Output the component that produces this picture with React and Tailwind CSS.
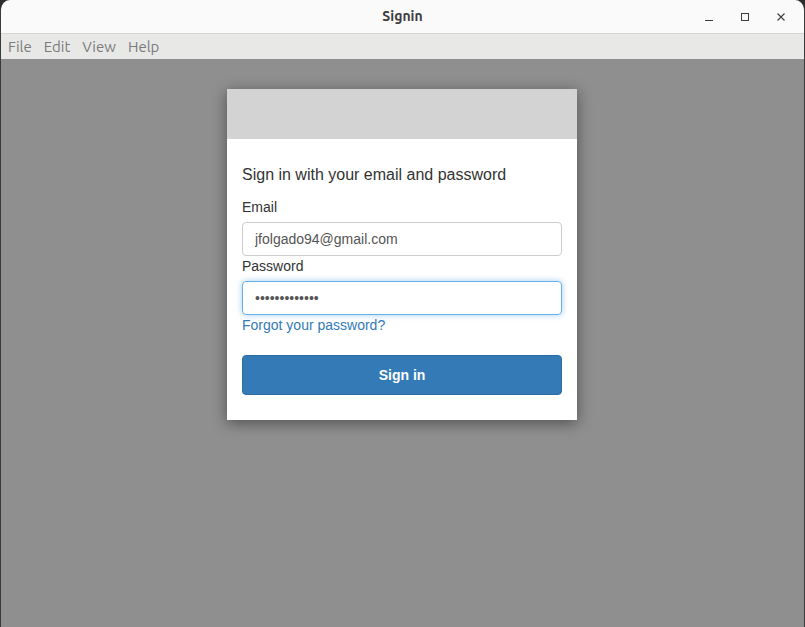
export default function App() {
  return (
    <div className="h-[627px] w-[805px] overflow-hidden bg-[#2c2c2c] font-['Liberation_Sans',Arial,sans-serif]">
      <div className="flex h-full flex-col overflow-hidden rounded-t-[10px] border-x border-[#3a3a3a] bg-[#8f8f8f]">
        <div className="relative flex h-[34px] shrink-0 items-center justify-center border-b border-[#d6d6d6] bg-[#fafafa]">
          <span className="font-['Ubuntu','DejaVu_Sans',sans-serif] text-[14px] font-bold text-[#3d3d3d]">Signin</span>
          <div className="absolute right-[18px] top-0 flex h-full items-center gap-[26px] text-[#3d3d3d]">
            <svg width="10" height="10" viewBox="0 0 10 10"><path d="M1 8.5h8" stroke="currentColor" strokeWidth="1" /></svg>
            <svg width="10" height="10" viewBox="0 0 10 10"><rect x="1.5" y="1.5" width="7" height="7" fill="none" stroke="currentColor" strokeWidth="1" /></svg>
            <svg width="10" height="10" viewBox="0 0 10 10"><path d="M1.5 1.5l7 7M8.5 1.5l-7 7" stroke="currentColor" strokeWidth="1.1" /></svg>
          </div>
        </div>
        <div className="flex h-[25px] shrink-0 items-center gap-[12px] bg-[#e8e8e7] px-[7px] pt-[2px] font-['Ubuntu','DejaVu_Sans',sans-serif] text-[15px] text-[#7b7b7b]">
          <span>File</span>
          <span>Edit</span>
          <span>View</span>
          <span>Help</span>
        </div>
        <div className="flex flex-1 justify-center pr-[1px] pt-[30px]">
          <div className="h-[331px] w-[350px] bg-white shadow-[0_3px_14px_rgba(0,0,0,0.45)]">
            <div className="h-[50px] bg-[#d3d3d3]" />
            <div className="px-[15px] pt-[26px] text-[#333]">
              <h1 className="text-[16px] leading-[20px]">Sign in with your email and password</h1>
              <label className="mt-[14px] block text-[14px] leading-[16px]">Email</label>
              <input
                readOnly
                value="jfolgado94@gmail.com"
                className="mt-[7px] block h-[34px] w-[320px] rounded-[4px] border border-[#ccc] px-[12px] text-[14px] text-[#555] outline-none"
              />
              <label className="block text-[14px] leading-[20px]">Password</label>
              <input
                readOnly
                type="password"
                value="xxxxxxxxxxxxx"
                className="mt-[5px] block h-[34px] w-[320px] rounded-[4px] border border-[#66afe9] px-[12px] text-[14px] text-[#555] shadow-[0_0_6px_rgba(102,175,233,0.6)] outline-none"
              />
              <a className="block text-[14px] leading-[20px] text-[#337ab7]">Forgot your password?</a>
              <button className="mt-[20px] block h-[40px] w-[320px] rounded-[4px] border border-[#2e6da4] bg-[#337ab7] text-[14px] font-bold text-white">
                Sign in
              </button>
            </div>
          </div>
        </div>
      </div>
    </div>
  )
}
